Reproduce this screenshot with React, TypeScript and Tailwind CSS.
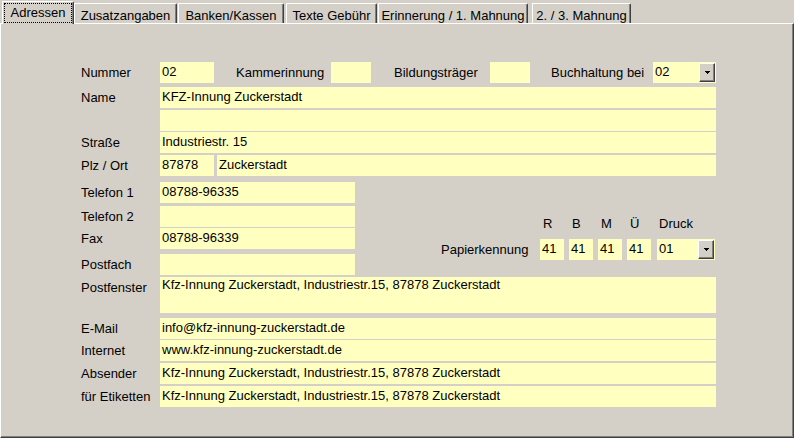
import React from 'react';

type Cls = { className?: string };

function Label({ text, className = '' }: { text: string } & Cls) {
  return <div className={`shrink-0 whitespace-nowrap pt-[3px] ${className}`}>{text}</div>;
}

function Field({ value = '', className = '' }: { value?: string } & Cls) {
  return (
    <div className={`shrink-0 h-[21px] bg-[#ffffc0] pl-[2px] pt-[2px] whitespace-nowrap overflow-hidden ${className}`}>
      {value}
    </div>
  );
}

// combo box with the classic little drop-down button
function Combo({ value, className = '' }: { value: string } & Cls) {
  return (
    <div className={`shrink-0 flex h-[21px] bg-[#ffffc0] p-[1px] ${className}`}>
      <div className="flex-1 pl-[1px] pt-[1px]">{value}</div>
      <div className="w-[16px] flex items-center justify-center bg-[#d4d0c8] border border-t-white border-l-white border-r-[#404040] border-b-[#404040] shadow-[inset_-1px_-1px_0_#808080]">
        <svg width="5" height="3" viewBox="0 0 5 3" shapeRendering="crispEdges">
          <path d="M0 0h5v1H0zM1 1h3v1H1zM2 2h1v1H2z" fill="#000" />
        </svg>
      </div>
    </div>
  );
}

function Row({ label, children, className = '' }: { label: string; children?: React.ReactNode } & Cls) {
  return (
    <div className={`flex h-[21px] ${className}`}>
      <Label text={label} className="w-[79px]" />
      {children}
    </div>
  );
}

function Tab({ text, className = '' }: { text: string } & Cls) {
  return (
    <div className={`h-[20px] shrink-0 text-center pt-[4px] bg-[#d4d0c8] border-l border-t border-r border-l-white border-t-white border-r-[#404040] rounded-tr-[2px] shadow-[inset_-1px_0_0_#808080] whitespace-nowrap ${className}`}>
      {text}
    </div>
  );
}

const absender = 'Kfz-Innung Zuckerstadt, Industriestr.15, 87878 Zuckerstadt';

export default function App() {
  return (
    <div className="w-[794px] h-[438px] flex flex-col overflow-hidden bg-[#d4d0c8] text-black text-[13px] leading-[15px] font-['Liberation_Sans',Arial,sans-serif]">
      {/* tab strip */}
      <div className="flex items-end h-[23px] pl-[2px]">
        <div className="relative z-10 -mb-px h-[23px] w-[72px] shrink-0 text-center pt-[3px] bg-[#d4d0c8] border-l border-t border-r border-l-white border-t-white border-r-[#404040] rounded-tr-[2px] shadow-[inset_-1px_0_0_#808080]">
          <div className="absolute left-[1px] top-[1px] right-[1px] bottom-[1px] border border-dotted border-black" />
          Adressen
        </div>
        <Tab text="Zusatzangaben" className="w-[103px]" />
        <Tab text="Banken/Kassen" className="ml-[1px] w-[106px]" />
        <Tab text="Texte Gebühr" className="ml-[2px] w-[91px]" />
        <Tab text="Erinnerung / 1. Mahnung" className="ml-[1px] w-[150px]" />
        <Tab text="2. / 3. Mahnung" className="ml-[4px] w-[99px]" />
      </div>

      {/* page */}
      <div className="relative flex-1 border border-t-white border-l-white border-r-[#404040] border-b-[#404040] shadow-[inset_-1px_-1px_0_#808080] pt-[38px] pl-[80px]">
        <div className="w-[635px] flex flex-col">
          <Row label="Nummer">
            <Field value="02" className="w-[54px]" />
            <Label text="Kammerinnung" className="ml-[22px] w-[95px]" />
            <Field className="w-[40px]" />
            <Label text="Bildungsträger" className="ml-[23px] w-[96px]" />
            <Field className="w-[40px]" />
            <Label text="Buchhaltung bei" className="ml-[21px] w-[102px]" />
            <Combo value="02" className="w-[63px]" />
          </Row>

          <Row label="Name" className="mt-[4px]">
            <Field value="KFZ-Innung Zuckerstadt" className="flex-1" />
          </Row>
          <Row label="" className="mt-[2px]">
            <Field className="flex-1" />
          </Row>
          <Row label="Straße" className="mt-[1px]">
            <Field value="Industriestr. 15" className="flex-1" />
          </Row>
          <Row label="Plz / Ort" className="mt-[2px]">
            <Field value="87878" className="w-[54px]" />
            <Field value="Zuckerstadt" className="ml-[3px] flex-1" />
          </Row>

          <div className="flex mt-[6px]">
            <div className="w-[274px] flex flex-col">
              <Row label="Telefon 1">
                <Field value="08788-96335" className="flex-1" />
              </Row>
              <Row label="Telefon 2" className="mt-[3px]">
                <Field className="flex-1" />
              </Row>
              <Row label="Fax" className="mt-[1px]">
                <Field value="08788-96339" className="flex-1" />
              </Row>
              <Row label="Postfach" className="mt-[5px]">
                <Field className="flex-1" />
              </Row>
            </div>

            <div className="ml-[86px] flex flex-col">
              <div className="flex mt-[34px]">
                <div className="w-[99px]" />
                <div className="w-[24px] pl-[3px]">R</div>
                <div className="ml-[5px] w-[24px] pl-[3px]">B</div>
                <div className="ml-[5px] w-[24px] pl-[3px]">M</div>
                <div className="ml-[5px] w-[24px] pl-[3px]">Ü</div>
                <div className="ml-[6px] w-[58px] pl-[2px]">Druck</div>
              </div>
              <div className="flex mt-[8px]">
                <Label text="Papierkennung" className="w-[99px]" />
                <Field value="41" className="w-[24px]" />
                <Field value="41" className="ml-[5px] w-[24px]" />
                <Field value="41" className="ml-[5px] w-[24px]" />
                <Field value="41" className="ml-[5px] w-[24px]" />
                <Combo value="01" className="ml-[6px] w-[58px]" />
              </div>
            </div>
          </div>

          <div className="flex mt-[2px] h-[36px]">
            <Label text="Postfenster" className="w-[79px]" />
            <div className="flex-1 bg-[#ffffc0] pl-[2px] whitespace-nowrap">{absender}</div>
          </div>

          <Row label="E-Mail" className="mt-[5px]">
            <Field value="info@kfz-innung-zuckerstadt.de" className="flex-1" />
          </Row>
          <Row label="Internet" className="mt-[1px]">
            <Field value="www.kfz-innung-zuckerstadt.de" className="flex-1" />
          </Row>
          <Row label="Absender" className="mt-[2px]">
            <Field value={absender} className="flex-1" />
          </Row>
          <Row label="für Etiketten" className="mt-[2px]">
            <Field value={absender} className="flex-1" />
          </Row>
        </div>
      </div>
    </div>
  );
}
